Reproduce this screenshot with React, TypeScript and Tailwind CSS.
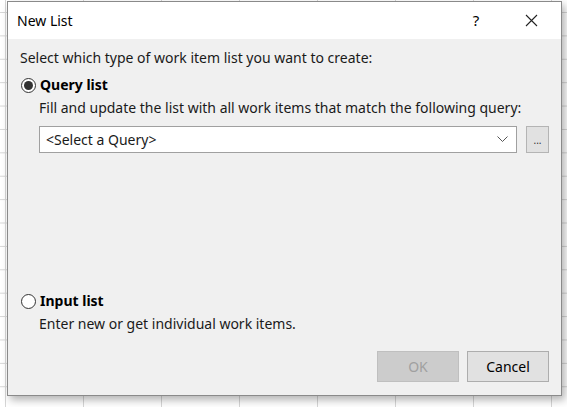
import { useState } from "react";

const font = "font-['Segoe_UI','Noto_Sans','Open_Sans',sans-serif]";

const Radio = ({ checked }: { checked: boolean }) => (
  <span className="flex h-[15px] w-[15px] items-center justify-center rounded-full border border-[#333] bg-white">
    {checked && <span className="h-[9px] w-[9px] rounded-full bg-[#333]" />}
  </span>
);

const NewListDialog = () => {
  const [kind, setKind] = useState<"query" | "input">("query");

  return (
    <div
      className={`flex h-[407px] w-[567px] overflow-hidden bg-white bg-[linear-gradient(to_right,#d6d6d6_1px,transparent_1px),linear-gradient(to_bottom,#d6d6d6_1px,transparent_1px)] bg-[size:78px_23.4px] bg-[position:5px_12px] pl-[7px] pt-[1px] ${font}`}
    >
      <div className="flex h-[395px] w-[555px] flex-col border border-[#8a8a8a] bg-[#f0f0f0] shadow-[3px_4px_8px_rgba(0,0,0,0.3)]">
        {/* title bar */}
        <div className="flex h-[37px] shrink-0 items-center bg-white pl-[9px] text-[14px] text-black">
          <span className="flex-1">New List</span>
          <span className="w-[20px] text-center text-[15px]">?</span>
          <span className="ml-[37px] mr-[22px] flex w-[16px] items-center justify-center">
            <svg width="13" height="13" viewBox="0 0 13 13">
              <path d="M1 1L12 12M12 1L1 12" stroke="#222" strokeWidth="1.1" />
            </svg>
          </span>
        </div>

        {/* body */}
        <div className="flex flex-1 flex-col pl-[12px] pr-[12px] text-[14px] text-[#1a1a1a]">
          <div className="mt-[10px] leading-[18px]">
            Select which type of work item list you want to create:
          </div>

          <div
            className="mt-[9px] flex cursor-pointer items-center gap-[4px] pl-[1px] leading-[18px]"
            onClick={() => setKind("query")}
          >
            <Radio checked={kind === "query"} />
            <span className="font-bold text-black">Query list</span>
          </div>

          <div className="mt-[5px] pl-[19px] leading-[18px]">
            Fill and update the list with all work items that match the following query:
          </div>

          <div className="mt-[9px] flex items-center gap-[9px] pl-[19px]">
            <div className="flex h-[27px] w-[479px] items-center border border-[#a0a0a0] bg-white pl-[6px] pr-[8px]">
              <span className="flex-1">&lt;Select a Query&gt;</span>
              <svg width="11" height="7" viewBox="0 0 11 7">
                <path d="M0.5 0.5L5.5 5.5L10.5 0.5" fill="none" stroke="#555" strokeWidth="1" />
              </svg>
            </div>
            <button className="flex h-[27px] w-[23px] items-end justify-center border border-[#b4b4b4] bg-[#e1e1e1] pb-[7px] text-[10px] leading-none text-[#333]">
              ...
            </button>
          </div>

          <div className="flex-1" />

          <div
            className="flex cursor-pointer items-center gap-[4px] pl-[1px] leading-[18px]"
            onClick={() => setKind("input")}
          >
            <Radio checked={kind === "input"} />
            <span className="font-bold text-black">Input list</span>
          </div>

          <div className="mt-[5px] pl-[19px] leading-[18px]">
            Enter new or get individual work items.
          </div>

          <div className="mb-[13px] mt-[18px] flex justify-end gap-[8px]">
            <button
              disabled
              className="h-[31px] w-[82px] border border-[#bfbfbf] bg-[#cccccc] text-[#a0a0a0]"
            >
              OK
            </button>
            <button className="h-[31px] w-[82px] border border-[#adadad] bg-[#e1e1e1] text-black">
              Cancel
            </button>
          </div>
        </div>
      </div>
    </div>
  );
};

export default function App() {
  return <NewListDialog />;
}
